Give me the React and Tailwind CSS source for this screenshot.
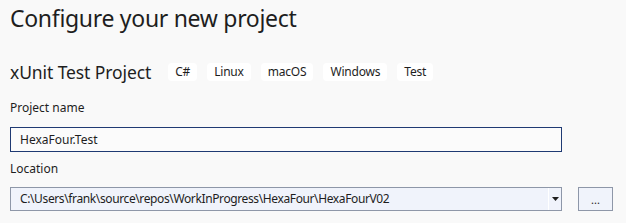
import React from "react";

const font = { fontFamily: '"Segoe UI", "Noto Sans", "Open Sans", sans-serif' };

function Tag({ children }) {
  return (
    <span className="flex h-[18px] items-center rounded-[4px] bg-white px-[7px] text-[12px] leading-none tracking-[-0.2px] text-[#1e1e1e]">
      {children}
    </span>
  );
}

export default function App() {
  return (
    <div className="h-[223px] w-[626px] overflow-hidden bg-[#f9f9f9] pl-[10px] text-[#1e1e1e]" style={font}>
      <h1 className="pt-[2px] text-[23px] leading-[32px] font-normal tracking-[-0.3px]">Configure your new project</h1>
      <div className="mt-[26px] flex items-center">
        <span className="text-[17.5px] leading-[24px] tracking-[-0.1px]">xUnit Test Project</span>
        <div className="ml-[17px] flex gap-[10px]">
          <Tag>C#</Tag>
          <Tag>Linux</Tag>
          <Tag>macOS</Tag>
          <Tag>Windows</Tag>
          <Tag>Test</Tag>
        </div>
      </div>
      <div className="mt-[16px] text-[12px] leading-[16px]">Project name</div>
      <div className="mt-[11px] flex h-[25px] w-[552px] items-center border border-[#1f3a73] bg-[#fbfbfb] pl-[9px] text-[12px]">
        HexaFour.Test
      </div>
      <div className="mt-[9px] text-[12px] leading-[16px]">Location</div>
      <div className="mt-[10px] flex items-center">
        <div className="flex h-[24px] w-[552px] items-center border border-[#8e97a8] bg-[#f0f3fb] text-[12px]">
          <span className="flex-1 pl-[9px] tracking-[-0.38px] text-[#1e1e1e]">C:\Users\frank\source\repos\WorkInProgress\HexaFour\HexaFourV02</span>
          <span className="flex h-full w-[13px] items-center justify-center border-l border-white">
            <svg width="7" height="4" viewBox="0 0 7 4"><path d="M0 0h7L3.5 4z" fill="#1e1e1e" /></svg>
          </span>
        </div>
        <div className="ml-[16px] flex h-[24px] w-[35px] items-end justify-center border border-[#8e97a8] bg-[#f0f3fb] pb-[5px] text-[11px] leading-none">
          ...
        </div>
      </div>
    </div>
  );
}
